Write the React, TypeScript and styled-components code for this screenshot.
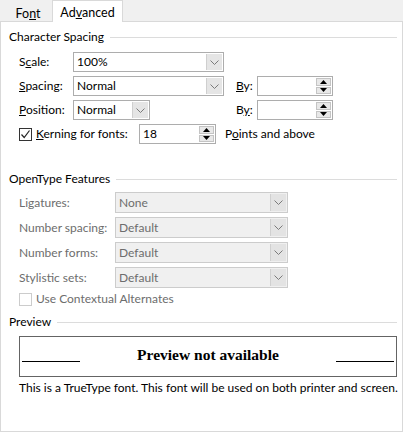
import React from "react";
import styled, { createGlobalStyle } from "styled-components";

const Global = createGlobalStyle`
  html, body { margin: 0; padding: 0; background: #ffffff; }
  body { font-family: Lato, "Segoe UI", sans-serif; font-size: 12px; line-height: 16px; color: #000; }
  * { box-sizing: border-box; }
`;

const Root = styled.div`
  width: 403px;
  height: 432px;
  display: flex;
  flex-direction: column;
  background: #f0f0f0;
`;

const TabStrip = styled.div`
  height: 21px;
  display: flex;
  align-items: flex-end;
  position: relative;
  z-index: 1;
`;

const Tab = styled.div<{ $active?: boolean }>`
  height: ${(p) => (p.$active ? "22px" : "19px")};
  margin-bottom: ${(p) => (p.$active ? "-1px" : "0")};
  width: ${(p) => (p.$active ? "71px" : "52px")};
  display: flex;
  align-items: center;
  justify-content: center;
  padding-top: ${(p) => (p.$active ? "3px" : "4px")};
  background: ${(p) => (p.$active ? "#ffffff" : "#f0f0f0")};
  border: 1px solid ${(p) => (p.$active ? "#d9d9d9" : "transparent")};
  border-bottom: none;
  padding-left: ${(p) => (p.$active ? "0" : "4px")};
  font-size: 12.5px;
`;

const Panel = styled.div`
  flex: 1;
  background: #ffffff;
  border: 1px solid #d9d9d9;
  display: flex;
  flex-direction: column;
  padding: 6px 5px 0 8px;
`;

const GroupHeader = styled.div<{ $top?: number }>`
  display: flex;
  align-items: center;
  height: 18px;
  gap: 6px;
  margin-top: ${(p) => p.$top ?? 0}px;
`;

const Rule = styled.div`
  flex: 1;
  height: 1px;
  background: #dcdcdc;
`;

const Section = styled.div<{ $gap: number; $top: number }>`
  display: flex;
  flex-direction: column;
  gap: ${(p) => p.$gap}px;
  padding-left: 10px;
  margin-top: ${(p) => p.$top}px;
`;

const Row = styled.div<{ $top?: number }>`
  display: flex;
  align-items: center;
  margin-top: ${(p) => p.$top ?? 0}px;
`;

const Label = styled.span<{ $w?: number; $disabled?: boolean }>`
  width: ${(p) => (p.$w ? `${p.$w}px` : "auto")};
  flex: none;
  color: ${(p) => (p.$disabled ? "#6d6d6d" : "#000")};
  white-space: nowrap;
`;

const ByLabel = styled.span<{ $ml: number }>`
  margin-left: ${(p) => p.$ml}px;
  width: 21px;
  flex: none;
`;

const Combo = styled.div<{ $w: number; $h: number; $disabled?: boolean }>`
  width: ${(p) => p.$w}px;
  height: ${(p) => p.$h}px;
  border: 1px solid ${(p) => (p.$disabled ? "#cccccc" : "#adadad")};
  background: ${(p) => (p.$disabled ? "#f0f0f0" : "#ffffff")};
  color: ${(p) => (p.$disabled ? "#6d6d6d" : "#000")};
  display: flex;
  align-items: stretch;
  flex: none;
`;

const ComboText = styled.div`
  flex: 1;
  display: flex;
  align-items: center;
  padding-left: 3px;
`;

const DropButton = styled.div<{ $disabled?: boolean }>`
  width: 16px;
  margin: 1px;
  background: ${(p) => (p.$disabled ? "#e3e3e3" : "#e5e5e5")};
  border-left: 1px solid ${(p) => (p.$disabled ? "#d0d0d0" : "#cfcfcf")};
  display: flex;
  align-items: center;
  justify-content: center;
`;

const Spin = styled.div<{ $w: number; $ml: number }>`
  width: ${(p) => p.$w}px;
  height: 20px;
  margin-left: ${(p) => p.$ml}px;
  border: 1px solid #adadad;
  background: #fff;
  display: flex;
  flex: none;
`;

const SpinText = styled.div`
  flex: 1;
  display: flex;
  align-items: center;
  padding-left: 3px;
`;

const SpinButtons = styled.div`
  width: 15px;
  margin: 1px 1px 1px 0;
  display: flex;
  flex-direction: column;
  gap: 1px;
`;

const SpinButton = styled.div`
  flex: 1;
  background: #e8e8e8;
  border: 1px solid #c4c4c4;
  display: flex;
  align-items: center;
  justify-content: center;
`;

const Check = styled.div<{ $disabled?: boolean }>`
  width: 13px;
  height: 13px;
  border: 1px solid ${(p) => (p.$disabled ? "#cccccc" : "#333333")};
  background: #fff;
  margin-right: 4px;
  display: flex;
  align-items: center;
  justify-content: center;
  flex: none;
`;

const PointsLabel = styled.span`
  margin-left: 9px;
`;

const PreviewBox = styled.div`
  margin: 5px 0 0 10px;
  width: 378px;
  height: 41px;
  border: 1px solid #646464;
  display: flex;
  align-items: flex-end;
  padding: 0 2px 13px 2px;
`;

const PreviewLine = styled.div`
  width: 58px;
  height: 1px;
  border-bottom: 1.5px solid #000;
  margin-bottom: 1px;
`;

const PreviewText = styled.div`
  flex: 1;
  text-align: center;
  font-family: "Liberation Serif", "Times New Roman", serif;
  font-weight: bold;
  font-size: 15.5px;
  line-height: 16px;
`;

const Note = styled.div`
  margin: 3px 0 0 10px;
  white-space: nowrap;
`;

const Chevron = () => (
  <svg width="9" height="5" viewBox="0 0 9 5">
    <polyline points="0.5,0.5 4.5,4.5 8.5,0.5" fill="none" stroke="#7a7a7a" strokeWidth="1" />
  </svg>
);

const Up = () => (
  <svg width="7" height="4" viewBox="0 0 7 4">
    <polygon points="0,4 7,4 3.5,0" fill="#000" />
  </svg>
);
const Down = () => (
  <svg width="7" height="4" viewBox="0 0 7 4">
    <polygon points="0,0 7,0 3.5,4" fill="#000" />
  </svg>
);

const Tick = () => (
  <svg width="11" height="11" viewBox="0 0 11 11">
    <polyline points="1.5,5.5 4.2,8.5 9.5,1.5" fill="none" stroke="#222" strokeWidth="1.2" />
  </svg>
);

const Select: React.FC<{ w: number; h: number; value: string; disabled?: boolean }> = ({ w, h, value, disabled }) => (
  <Combo $w={w} $h={h} $disabled={disabled}>
    <ComboText>{value}</ComboText>
    <DropButton $disabled={disabled}>
      <Chevron />
    </DropButton>
  </Combo>
);

const SpinBox: React.FC<{ w: number; ml: number; value?: string }> = ({ w, ml, value }) => (
  <Spin $w={w} $ml={ml}>
    <SpinText>{value}</SpinText>
    <SpinButtons>
      <SpinButton>
        <Up />
      </SpinButton>
      <SpinButton>
        <Down />
      </SpinButton>
    </SpinButtons>
  </Spin>
);

export default function App() {
  return (
    <Root>
      <Global />
      <TabStrip>
        <Tab>
          <span>
            Fo<u>n</u>t
          </span>
        </Tab>
        <Tab $active>
          <span>
            Ad<u>v</u>anced
          </span>
        </Tab>
      </TabStrip>
      <Panel>
        <GroupHeader>
          <span>Character Spacing</span>
          <Rule />
        </GroupHeader>
        <Section $gap={4} $top={6}>
          <Row>
            <Label $w={54}>
              S<u>c</u>ale:
            </Label>
            <Select w={151} h={20} value="100%" />
          </Row>
          <Row>
            <Label $w={54}>
              <u>S</u>pacing:
            </Label>
            <Select w={151} h={20} value="Normal" />
            <ByLabel $ml={12}>
              <u>B</u>y:
            </ByLabel>
            <SpinBox w={76} ml={0} />
          </Row>
          <Row>
            <Label $w={54}>
              <u>P</u>osition:
            </Label>
            <Select w={77} h={20} value="Normal" />
            <ByLabel $ml={86}>
              B<u>y</u>:
            </ByLabel>
            <SpinBox w={76} ml={0} />
          </Row>
          <Row>
            <Check>
              <Tick />
            </Check>
            <Label $w={103}>
              <u>K</u>erning for fonts:
            </Label>
            <SpinBox w={77} ml={0} value="18" />
            <PointsLabel>
              P<u>o</u>ints and above
            </PointsLabel>
          </Row>
        </Section>
        <GroupHeader $top={26}>
          <span>OpenType Features</span>
          <Rule />
        </GroupHeader>
        <Section $gap={4} $top={4}>
          <Row>
            <Label $w={96} $disabled>
              Ligatures:
            </Label>
            <Select w={173} h={21} value="None" disabled />
          </Row>
          <Row>
            <Label $w={96} $disabled>
              Number spacing:
            </Label>
            <Select w={173} h={21} value="Default" disabled />
          </Row>
          <Row>
            <Label $w={96} $disabled>
              Number forms:
            </Label>
            <Select w={173} h={21} value="Default" disabled />
          </Row>
          <Row>
            <Label $w={96} $disabled>
              Stylistic sets:
            </Label>
            <Select w={173} h={21} value="Default" disabled />
          </Row>
          <Row $top={-1}>
            <Check $disabled />
            <Label $disabled>Use Contextual Alternates</Label>
          </Row>
        </Section>
        <GroupHeader $top={6}>
          <span>Preview</span>
          <Rule />
        </GroupHeader>
        <PreviewBox>
          <PreviewLine />
          <PreviewText>Preview not available</PreviewText>
          <PreviewLine />
        </PreviewBox>
        <Note>This is a TrueType font. This font will be used on both printer and screen.</Note>
      </Panel>
    </Root>
  );
}
